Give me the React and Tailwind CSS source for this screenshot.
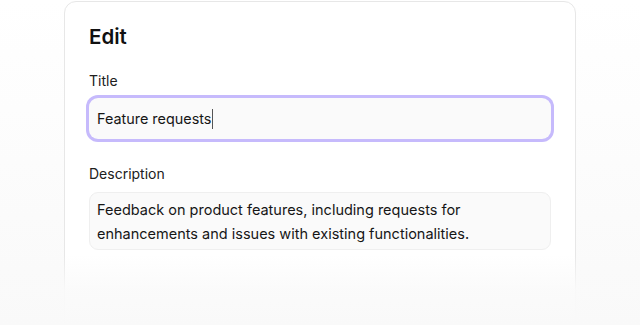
export default function App() {
  return (
    <div
      className="relative h-[325px] w-[640px] overflow-hidden bg-gradient-to-b from-white to-[#f9f9f9]"
      style={{ fontFamily: "Inter, 'Noto Sans', sans-serif" }}
    >
      <div className="ml-[64px] mt-[1px] w-[512px] h-[340px] rounded-t-[12px] border border-[#e7e7e7] bg-white px-6 pt-[21px]">
        <h1 className="text-[20.5px] leading-[28px] font-semibold text-[#111111]">Edit</h1>
        <div className="mt-[20px] text-[14px] leading-[20px] text-[#202020]">Title</div>
        <div className="mt-[7px] flex h-[41px] items-center rounded-[9px] bg-[#fafafa] px-2 text-[14.4px] text-[#161616] ring-[3px] ring-[#c6bafc]">
          <span>Feature requests</span>
          <span className="ml-[1px] inline-block h-[20px] w-[1px] bg-[#555]"></span>
        </div>
        <div className="mt-[25px] text-[14px] leading-[20px] text-[#202020]">Description</div>
        <div className="mt-[8px] h-[58px] rounded-[9px] border border-[#efefef] bg-[#fafafa] pl-[7px] pr-2 pt-[5px] text-[14.5px] leading-[24px] text-[#161616]">
          Feedback on product features, including requests for enhancements and issues with existing functionalities.
        </div>
      </div>
      <div className="pointer-events-none absolute left-0 right-0 top-[255px] h-[70px] bg-gradient-to-b from-transparent via-[#fafafa]/90 to-[#f9f9f9]"></div>
    </div>
  );
}
